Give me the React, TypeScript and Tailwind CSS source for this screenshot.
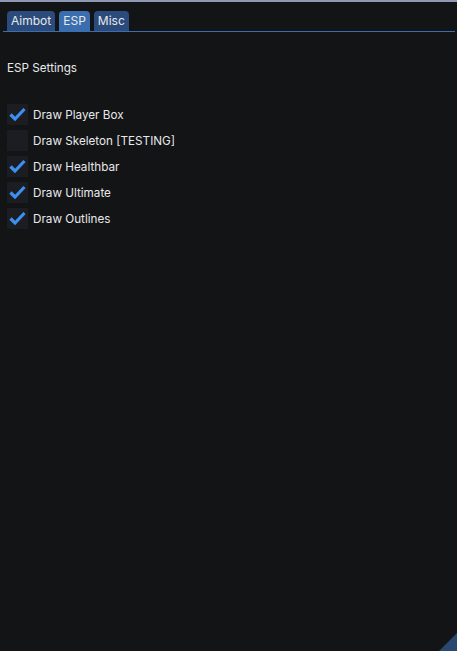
import React from "react";

const Check = () => (
  <svg width="21" height="21" viewBox="0 0 21 21">
    <path d="M3.5 10.5 L8 15 L17.5 5" fill="none" stroke="#3d8ff0" strokeWidth="3.2" strokeLinecap="butt" strokeLinejoin="miter" />
  </svg>
);

const rows: [string, boolean][] = [
  ["Draw Player Box", true],
  ["Draw Skeleton [TESTING]", false],
  ["Draw Healthbar", true],
  ["Draw Ultimate", true],
  ["Draw Outlines", true],
];

export default function App() {
  return (
    <div className="w-[457px] h-[651px] bg-[#131416] relative overflow-hidden text-[#e8e8ea]" style={{ fontFamily: "Inter, 'Noto Sans', sans-serif" }}>
      <div className="h-[2px] bg-[#8e97b3]" />
      <div className="flex gap-[4px] pl-[7px] pt-[9px] h-[29px] items-end">
        <div className="h-[20px] px-[4px] rounded-t-[4px] bg-[#2a4b7c] text-[12px] leading-[20px]">Aimbot</div>
        <div className="h-[20px] px-[4px] rounded-t-[4px] bg-[#3b6eae] text-[12px] leading-[20px]">ESP</div>
        <div className="h-[20px] px-[4px] rounded-t-[4px] bg-[#2a4b7c] text-[12px] leading-[20px]">Misc</div>
      </div>
      <div className="ml-[3px] mr-[2px] h-[1px] bg-[#3b6eae]" />
      <div className="pl-[7px] pt-[28px] text-[11.7px] leading-[16px]">ESP Settings</div>
      <div className="flex flex-col gap-[5px] pl-[7px] pt-[28px]">
        {rows.map(([label, on]) => (
          <div key={label} className="flex items-center gap-[5px] h-[21px]">
            <div className="w-[21px] h-[21px] bg-[#1c1d22] flex items-center justify-center">{on && <Check />}</div>
            <span className="text-[11.7px] leading-[16px]">{label}</span>
          </div>
        ))}
      </div>
      <svg className="absolute right-0 bottom-0" width="18" height="18" viewBox="0 0 18 18">
        <path d="M18 0 L18 18 L0 18 Z" fill="#29476f" />
      </svg>
    </div>
  );
}
